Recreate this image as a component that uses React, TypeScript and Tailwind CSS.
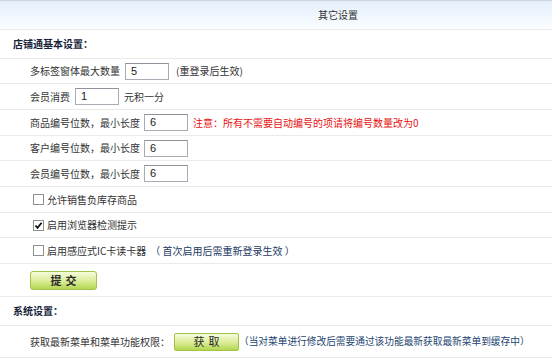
import React from 'react'

const font = { fontFamily: '"Noto Sans CJK SC", "Noto Sans", sans-serif' }

function Row({ h, children, className = '' }: { h: string; children: React.ReactNode; className?: string }) {
  return (
    <div className={`flex items-center whitespace-nowrap border-b border-[#ebebeb] ${h} ${className}`}>
      {children}
    </div>
  )
}

function TextBox({ value }: { value: string }) {
  return (
    <div
      className="w-[44px] h-[17px] shrink-0 border border-[#a7adb5] border-t-[#8c939b] bg-white flex items-center pl-[5px] text-[11px] text-[#222]"
      style={{ fontFamily: '"Liberation Sans", Arial, sans-serif' }}
    >
      {value}
    </div>
  )
}

function Check({ checked }: { checked?: boolean }) {
  return (
    <span className="w-[11px] h-[11px] border border-[#8f8f8f] bg-white flex items-center justify-center mr-[3px] shrink-0">
      {checked && (
        <svg width="9" height="9" viewBox="0 0 9 9">
          <path d="M1.5 4.5 L3.5 6.8 L7.6 1.8" stroke="#111" strokeWidth="1.8" fill="none" />
        </svg>
      )}
    </span>
  )
}

export default function App() {
  return (
    <div className="w-[555px] h-[363px] bg-white text-[10px] text-[#333] leading-none" style={font}>
      <div className="w-[552px]">
        {/* header */}
        <div className="h-[30px] border-t border-[#cfd4da] border-b border-b-[#ebebeb] bg-gradient-to-b from-[#e4eefb] to-[#fbfdff] flex items-center pl-[318px]">
          其它设置
        </div>

        <Row h="h-[29px]">
          <span className="pl-[13px] font-bold text-[#16243a]">店铺通基本设置：</span>
        </Row>

        <Row h="h-[25px]" className="pl-[30px] gap-[5px]">
          <span>多标签窗体最大数量</span>
          <TextBox value="5" />
          <span className="ml-[2px]">(重登录后生效)</span>
        </Row>
        <Row h="h-[26px]" className="pl-[30px] gap-[5px]">
          <span>会员消费</span>
          <TextBox value="1" />
          <span>元积一分</span>
        </Row>
        <Row h="h-[26px]" className="pl-[30px] gap-[4px]">
          <span>商品编号位数，最小长度</span>
          <TextBox value="6" />
          <span className="ml-[1px] text-[#e81010]">注意：所有不需要自动编号的项请将编号数量改为0</span>
        </Row>
        <Row h="h-[25px]" className="pl-[30px] gap-[4px]">
          <span>客户编号位数，最小长度</span>
          <TextBox value="6" />
        </Row>
        <Row h="h-[26px]" className="pl-[30px] gap-[4px]">
          <span>会员编号位数，最小长度</span>
          <TextBox value="6" />
        </Row>
        <Row h="h-[26px]" className="pl-[33px]">
          <Check />
          <span>允许销售负库存商品</span>
        </Row>
        <Row h="h-[25px]" className="pl-[33px]">
          <Check checked />
          <span>启用浏览器检测提示</span>
        </Row>
        <Row h="h-[26px]" className="pl-[33px]">
          <Check />
          <span>启用感应式IC卡读卡器</span>
          <span className="ml-[4px] text-[#1e3a64]">（ 首次启用后需重新登录生效 ）</span>
        </Row>

        <Row h="h-[33px]" className="pl-[30px]">
          <button className="w-[67px] h-[19px] rounded-[3px] border border-[#a3c24a] bg-gradient-to-b from-[#f6fbdc] via-[#dcee9a] to-[#b4d64e] font-bold text-[11px] text-[#2a2a2a] tracking-[4px] pl-[4px]">
            提交
          </button>
        </Row>

        <Row h="h-[29px]">
          <span className="pl-[13px] font-bold text-[#16243a]">系统设置：</span>
        </Row>

        <Row h="h-[32px]" className="pl-[30px]">
          <span className="w-[144px]">获取最新菜单和菜单功能权限：</span>
          <button className="w-[65px] h-[18px] rounded-[2px] border border-[#a3c24a] bg-gradient-to-b from-[#f6fbdc] via-[#dcee9a] to-[#b4d64e] text-[11px] text-[#2a2a2a] tracking-[4px] pl-[4px]">
            获取
          </button>
          <span className="text-[#234570] text-[9.7px]">（当对菜单进行修改后需要通过该功能最新获取最新菜单到缓存中）</span>
        </Row>
      </div>
    </div>
  )
}
